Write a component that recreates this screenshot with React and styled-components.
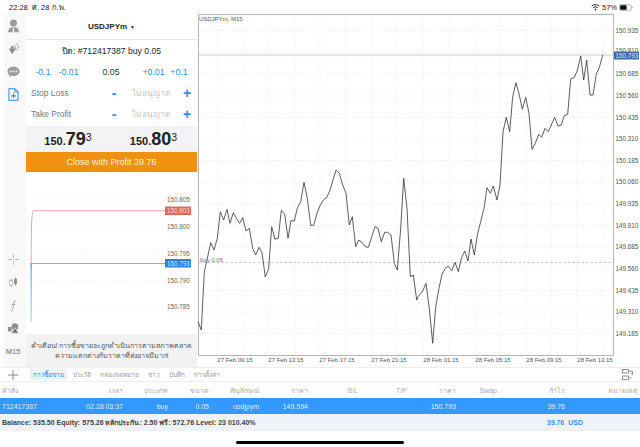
import React from "react";
import styled, { createGlobalStyle } from "styled-components";

const GlobalStyle = createGlobalStyle`
  html, body {
    margin: 0;
    padding: 0;
    background: #fff;
    overflow: hidden;
  }
  * { box-sizing: border-box; }
`;

const FONT = `"Liberation Sans", "Noto Sans", "DejaVu Sans", sans-serif`;

const Page = styled.div`
  width: 640px;
  height: 447px;
  display: flex;
  flex-direction: column;
  font-family: ${FONT};
  color: #333;
  background: #fff;
`;

const StatusBar = styled.div`
  height: 14px;
  display: flex;
  align-items: center;
  justify-content: space-between;
  padding: 0 7px 0 9px;
  font-size: 7.5px;
  color: #222;
`;

const StatusRight = styled.div`
  display: flex;
  align-items: center;
  gap: 2px;
`;

const Main = styled.div`
  height: 353px;
  display: flex;
`;

const Sidebar = styled.div`
  width: 22px;
  margin-left: 4px;
  display: flex;
  flex-direction: column;
  justify-content: space-between;
  padding: 0 4px 4px 0;
  background: #f8f8f8;
`;

const SideGroup = styled.div`
  display: flex;
  flex-direction: column;
  align-items: center;
`;

const SideItem = styled.div`
  height: 23px;
  display: flex;
  align-items: center;
  justify-content: center;
  font-size: 7.5px;
  font-weight: bold;
  color: #999;
`;

const Panel = styled.div`
  width: 171px;
  display: flex;
  flex-direction: column;
  background: #fff;
`;

const PanelHeader = styled.div`
  height: 26px;
  display: flex;
  align-items: center;
  justify-content: center;
  gap: 3px;
  font-size: 8px;
  font-weight: bold;
  color: #222;
  border-bottom: 1px solid #e6e6e6;
`;

const Caret = styled.span`
  font-size: 5px;
`;

const OrderLine = styled.div`
  height: 21px;
  display: flex;
  align-items: center;
  justify-content: center;
  font-size: 8.6px;
  color: #222;
`;

const VolumeRow = styled.div`
  height: 21px;
  display: grid;
  grid-template-columns: 34px 17px 68px 17px 34px;
  align-items: center;
  justify-items: center;
  font-size: 8.8px;
  white-space: nowrap;
`;

const Step = styled.span`
  color: #2d8ff0;
`;

const Volume = styled.span`
  color: #333;
`;

const StopRow = styled.div`
  height: 21px;
  display: grid;
  grid-template-columns: 71px 24px 49px 24px;
  align-items: center;
  padding-left: 5px;
  font-size: 8.5px;
  color: #777;
`;

const Sign = styled.span`
  justify-self: center;
  color: #2d8ff0;
  font-size: 14px;
  font-weight: bold;
  line-height: 1;
`;

const Denied = styled.span`
  justify-self: center;
  color: #c4c4c4;
  font-size: 8.4px;
`;

const Prices = styled.div`
  height: 26px;
  margin-top: 2px;
  display: grid;
  grid-template-columns: 84px 87px;
  align-items: center;
  background: #f3f3f5;
  color: #222;
  font-weight: bold;
`;

const Price = styled.div`
  display: flex;
  justify-content: center;
  align-items: baseline;
  font-size: 11px;
`;

const Big = styled.span`
  font-size: 18px;
`;

const Sup = styled.span`
  font-size: 10.5px;
  align-self: flex-start;
  margin-top: 2px;
  font-weight: normal;
`;

const CloseButton = styled.div`
  height: 20px;
  display: flex;
  align-items: center;
  justify-content: center;
  background: #f0920f;
  color: #fdf1dc;
  font-size: 9px;
`;

const MiniChart = styled.svg`
  display: block;
  width: 171px;
  height: 162px;
`;

const Warning = styled.div`
  flex: 1;
  display: flex;
  flex-direction: column;
  align-items: center;
  justify-content: center;
  background: #f2f2f2;
  font-size: 7.1px;
  line-height: 10px;
  color: #555;
  white-space: nowrap;
`;

const ChartSvg = styled.svg`
  display: block;
  width: 443px;
  height: 353px;
`;

const Toolbar = styled.div`
  height: 15px;
  display: flex;
  align-items: center;
  padding: 0 7px 0 7px;
  border-top: 1px solid #eee;
  border-bottom: 1px solid #eee;
`;

const Tabs = styled.div`
  flex: 1;
  display: flex;
  align-items: center;
  gap: 3px;
  margin-left: 11px;
`;

const Tab = styled.div`
  height: 11px;
  padding: 0 3px;
  display: flex;
  align-items: center;
  font-size: 6.5px;
  color: ${(p) => (p.$active ? "#2d8ff0" : "#999")};
  background: ${(p) => (p.$active ? "#e8f2fc" : "transparent")};
`;

const columns = "50px 73px 45px 41px 50px 49px 50px 49px 49px 41px 68px 73px";

const TableRow = styled.div`
  height: 16px;
  display: grid;
  grid-template-columns: ${columns};
  align-items: center;
  justify-items: end;
  font-size: 7px;
  color: ${(p) => (p.$selected ? "#dcecff" : "#aaa")};
  background: ${(p) => (p.$selected ? "#3399ff" : "#fff")};
  & > :first-child {
    justify-self: start;
    padding-left: 2px;
    white-space: nowrap;
  }
`;

const BalanceRow = styled.div`
  height: 16px;
  display: flex;
  align-items: center;
  justify-content: space-between;
  padding: 0 57px 0 2px;
  background: #eef3fa;
  font-size: 7px;
  font-weight: bold;
  color: #444;
`;

const BalanceProfit = styled.span`
  color: #3a94ee;
  word-spacing: 2px;
`;

const HomeArea = styled.div`
  flex: 1;
  display: flex;
  justify-content: center;
  padding-top: 10px;
  border-top: 1px solid #f0f0f0;
`;

const HomeBar = styled.div`
  width: 168px;
  height: 3px;
  border-radius: 2px;
  background: #000;
`;

// page coordinates read off the screenshot (3x crops)
const fromLeft = [[6,410],[16,435],[25,260],[35,215],[44,173],[54,195],[64,160],[73,80],[83,105],[93,73],[102,115],[112,83],[121,100],[131,115],[140,98],[150,138],[160,130],[170,190],[179,210],[189,187],[198,203],[208,276],[218,250],[227,125],[237,163],[247,160],[256,76],[266,88],[276,160],[285,107],[295,108],[304,70],[314,50],[324,-8],[334,40],[344,121],[353,121],[363,85],[372,62],[382,45],[392,38],[402,15],[411,-15],[420,-45],[430,-35],[440,0],[450,25],[460,120],[469,95],[479,185],[488,165],[498,172],[508,185],[517,187],[527,155],[537,125],[546,130],[556,170],[566,142],[575,142],[585,150],[595,235],[604,255],[614,130],[623,-20],[633,70],[643,275],[652,270],[662,345]];
const fromMiddle = [[0,335],[14,318],[24,295],[34,370],[44,475],[53,365],[63,310],[72,268],[82,250],[91,243],[101,257],[111,232],[121,260],[130,220],[140,198],[150,228],[159,162],[169,210],[179,145],[188,110],[198,70],[207,8],[217,25],[226,3],[237,45],[246,0]];
const fromTop = [[255,395],[265,352],[275,395],[284,290],[294,248],[304,285],[313,328],[323,292],[333,340],[342,448],[352,430],[362,403],[371,412],[381,385],[391,395],[400,375],[410,352],[420,378],[430,375],[439,347],[449,343],[458,237],[468,233],[478,212],[488,168],[497,240],[506,180],[516,285],[525,285],[535,222],[544,203],[554,165]];

const pricePath = [
  ...fromLeft.map(([x, y]) => [196 + x / 3, 185 + y / 3]),
  ...fromMiddle.map(([x, y]) => [418 + x / 3, 185 + y / 3]),
  ...fromTop.map(([x, y]) => [418 + x / 3, y / 3]),
]
  .map(([x, y]) => `${x.toFixed(1)},${y.toFixed(1)}`)
  .join(" ");

const gridX = [218, 243, 269, 295, 320, 346, 372, 397, 423, 449, 475, 500, 526, 551, 577, 603];
const priceLabels = [
  ["150.935", 30.5], ["150.685", 74], ["150.560", 96], ["150.435", 117.5], ["150.310", 139],
  ["150.185", 160.5], ["150.060", 182], ["149.935", 204], ["149.810", 225.5], ["149.685", 247],
  ["149.560", 269], ["149.435", 290.5], ["149.310", 312], ["149.185", 333.5],
];
const timeLabels = [
  ["27 Feb 09:15", 235], ["27 Feb 13:15", 286], ["27 Feb 17:15", 337], ["27 Feb 21:15", 389],
  ["28 Feb 01:15", 441], ["28 Feb 05:15", 493], ["28 Feb 09:15", 544], ["28 Feb 13:15", 595],
];
const gridY = [30.5, 52, 74, 96, 117.5, 139, 160.5, 182, 204, 225.5, 247, 269, 290.5, 312, 333.5];

const chartText = { fontFamily: "Liberation Sans, sans-serif", fontSize: 6, fill: "#555" };
const axisText = { ...chartText, fontSize: 6.3 };

const Chart = () => (
  <ChartSvg viewBox="197 14 443 353">
    {gridX.map((x) => (
      <line key={x} x1={x} y1="15" x2={x} y2="355" stroke="#e6e6e6" strokeWidth="0.7" strokeDasharray="1.5 2" />
    ))}
    {gridY.map((y) => (
      <line key={y} x1="198" y1={y} x2="613" y2={y} stroke="#e6e6e6" strokeWidth="0.7" strokeDasharray="1.5 2" />
    ))}
    <path d="M198.5 355V14.5H613.5V355.5H198.5" fill="none" stroke="#b5b5b5" strokeWidth="1" />
    <line x1="199" y1="55" x2="613" y2="55" stroke="#bdd0e2" strokeWidth="1" />
    <line x1="199" y1="262.5" x2="613" y2="262.5" stroke="#bbb" strokeWidth="0.8" strokeDasharray="2.5 2" />
    <polyline points={pricePath} fill="none" stroke="#333" strokeWidth="0.8" />
    <text x="199" y="21" {...chartText}>USDJPYm, M15</text>
    <text x="200" y="262" {...chartText} fill="#777">buy 0.05</text>
    {priceLabels.map(([label, y]) => (
      <text key={label} x="615.500" y={y + 2.3} {...axisText}>{label}</text>
    ))}
    <text x="615.500" y="53" {...axisText}>150.810</text>
    <rect x="614" y="51.500" width="25" height="8" fill="#3d6da6" />
    <text x="615.500" y="57.800" {...axisText} fill="#dbe6f2">150.793</text>
    {timeLabels.map(([label, x]) => (
      <text key={label} x={x} y="361.500" textAnchor="middle" {...chartText}>{label}</text>
    ))}
  </ChartSvg>
);

const miniLabels = [["150.805", 200], ["150.800", 227], ["150.795", 253.5], ["150.790", 280.5], ["150.785", 307]];

const miniText = { fontFamily: "Liberation Sans, sans-serif", fontSize: 6.3 };

const Mini = () => (
  <MiniChart viewBox="26 172 171 162">
    <defs>
      <linearGradient id="fadeBlue" x1="0" y1="0" x2="0" y2="1">
        <stop offset="0" stopColor="#6fa6e0" />
        <stop offset="1" stopColor="#bcdcf8" />
      </linearGradient>
    </defs>
    {miniLabels.map(([label, y]) => (
      <g key={label}>
        <line x1="36" y1={y} x2="164" y2={y} stroke="#e8e8e8" strokeWidth="0.7" strokeDasharray="1.5 3" />
        <text x="167" y={y + 2.3} {...miniText} fill="#666">{label}</text>
      </g>
    ))}
    <path d="M31 268 L31.500 225 Q32 210.700 34 210.700 H165" fill="none" stroke="#e9a9a0" strokeWidth="1" />
    <rect x="165" y="206.500" width="26" height="8.500" fill="#e0675f" />
    <text x="167" y="213" {...miniText} fill="#f8d8d4">150.803</text>
    <path d="M31.500 263.500 H165" fill="none" stroke="#85afe0" strokeWidth="1" />
    <rect x="30.500" y="263" width="1.300" height="59" fill="url(#fadeBlue)" />
    <rect x="165" y="259" width="26" height="8.500" fill="#2f7fe0" />
    <text x="167" y="265.500" {...miniText} fill="#d5e6fa">150.793</text>
  </MiniChart>
);

const PersonIcon = () => (
  <svg width="13" height="14" viewBox="0 0 16 18">
    <circle cx="8" cy="5" r="4.500" fill="#9b9b9b" />
    <path d="M1 17c0-4 2-6 5-6.500h4c3 .5 5 2.500 5 6.500z" fill="#9b9b9b" />
    <path d="M7.500 11h1L9 17H7z" fill="#f8f8f8" />
  </svg>
);

const ArrowsIcon = () => (
  <svg width="13" height="13" viewBox="0 0 16 16">
    <path d="M2 8h3V5h3v3h3l-4.500 7z" fill="#8f8f8f" />
    <path d="M8.500 6h2v4h2.500V6h2L12 1.500z" fill="#fff" stroke="#9b9b9b" strokeWidth="0.8" />
  </svg>
);

const ChatIcon = () => (
  <svg width="13" height="12" viewBox="0 0 15 14">
    <path d="M7.500 1C3.500 1 .5 3.300 .5 6.300c0 1.700 1 3.200 2.500 4.200L2.500 13l3-1.500c.6.100 1.300.200 2 .200 4 0 7-2.400 7-5.400S11.500 1 7.500 1z" fill="#9b9b9b" />
    <circle cx="4.300" cy="6.300" r="1" fill="#f8f8f8" />
    <circle cx="7.500" cy="6.300" r="1" fill="#f8f8f8" />
    <circle cx="10.700" cy="6.300" r="1" fill="#f8f8f8" />
  </svg>
);

const NewOrderIcon = () => (
  <svg width="11" height="13" viewBox="0 0 12 14" fill="none" stroke="#2d8ff0" strokeWidth="1.100">
    <path d="M1 .7h6.500L11 4.200v9H1z" />
    <path d="M7.500 .7v3.500H11" />
    <path d="M6 5.700v5.500M3.300 8.500h5.400" />
  </svg>
);

const CrossIcon = () => (
  <svg width="11" height="11" viewBox="0 0 13 13" stroke="#a8a8a8" strokeWidth="0.9">
    <path d="M6.500 0v5M6.500 8v5M0 6.500h5M8 6.500h5" />
  </svg>
);

const CandlesIcon = () => (
  <svg width="9" height="11" viewBox="0 0 11 13">
    <path d="M2.500 1.500v11" stroke="#9b9b9b" strokeWidth="0.8" />
    <rect x="1" y="4" width="3" height="6" fill="#fff" stroke="#9b9b9b" strokeWidth="0.8" />
    <path d="M8 0v11" stroke="#8a8a8a" strokeWidth="0.8" />
    <rect x="6.300" y="2" width="3.400" height="6.500" fill="#8a8a8a" />
  </svg>
);

const FunctionIcon = () => (
  <svg width="7" height="12" viewBox="0 0 9 15" fill="none" stroke="#9b9b9b" strokeWidth="1.100">
    <path d="M8 1.200C6 .4 5.200 1.500 4.800 3.500L3.400 11.500C3 13.500 2 14.300 .8 13.700" />
    <path d="M2.300 5.500h4.500" />
  </svg>
);

const ObjectsIcon = () => (
  <svg width="11" height="11" viewBox="0 0 15 14">
    <rect x="0" y="5" width="5" height="6" fill="#8f8f8f" />
    <circle cx="9.500" cy="4.500" r="4.500" fill="#8f8f8f" />
    <path d="M9.500 6 14.500 13.500H4.500z" fill="#777" stroke="#f8f8f8" strokeWidth="0.7" />
  </svg>
);

const PlusIcon = () => (
  <svg width="12" height="12" viewBox="0 0 12 12" stroke="#888" strokeWidth="1">
    <path d="M6 1v10M1 6h10" />
  </svg>
);

const ConnectIcon = () => (
  <svg width="11" height="11" viewBox="0 0 11 11" fill="none" stroke="#888" strokeWidth="0.9">
    <rect x="0.500" y="0.500" width="6" height="3.500" />
    <rect x="0.500" y="7" width="6" height="3.500" />
    <path d="M6.500 2.200h4v3.300M10.500 5.500 9 4M10.500 5.500 11 5" />
    <path d="M6.500 8.800h3" />
  </svg>
);

const WifiIcon = () => (
  <svg width="9" height="7" viewBox="0 0 9 7" fill="none" stroke="#222" strokeWidth="1">
    <path d="M.7 2.200a5.500 5.500 0 0 1 7.600 0M2.200 3.800a3.300 3.300 0 0 1 4.600 0" />
    <circle cx="4.500" cy="5.600" r="0.900" fill="#222" stroke="none" />
  </svg>
);

const BatteryIcon = () => (
  <svg width="14" height="7" viewBox="0 0 14 7">
    <rect x="0.400" y="0.400" width="11.700" height="6.200" rx="1.500" fill="none" stroke="#999" strokeWidth="0.7" />
    <rect x="1.200" y="1.200" width="6.400" height="4.600" rx="0.700" fill="#111" />
    <path d="M12.700 2.300c.7.200.9.600.9 1.200s-.2 1-.9 1.200z" fill="#999" />
  </svg>
);

const tableHead = ["คำสั่ง", "เวลา", "ประเภท", "ขนาด", "สัญลักษณ์", "ราคา", "S/L", "T/P", "ราคา", "Swap", "กำไร", "หมายเหตุ"];
const tableRow = ["712417387", "02.28 03:37", "buy", "0.05", "usdjpym", "149.594", "", "", "150.793", "", "39.76", ""];
const tabs = ["การซื้อขาย", "ประวัติ", "กล่องจดหมาย", "ข่าว", "บันทึก", "การตั้งค่า"];

const PriceValue = ({ small, big, sup }) => (
  <Price>
    {small}
    <Big>{big}</Big>
    <Sup>{sup}</Sup>
  </Price>
);

const App = () => (
  <Page>
    <GlobalStyle />
    <StatusBar>
      <span>22:28 &nbsp;ศ. 28 ก.พ.</span>
      <StatusRight>
        <WifiIcon />
        <span>57%</span>
        <BatteryIcon />
      </StatusRight>
    </StatusBar>
    <Main>
      <Sidebar>
        <SideGroup>
          <SideItem><PersonIcon /></SideItem>
          <SideItem><ArrowsIcon /></SideItem>
          <SideItem><ChatIcon /></SideItem>
          <SideItem><NewOrderIcon /></SideItem>
        </SideGroup>
        <SideGroup>
          <SideItem><CrossIcon /></SideItem>
          <SideItem><CandlesIcon /></SideItem>
          <SideItem><FunctionIcon /></SideItem>
          <SideItem><ObjectsIcon /></SideItem>
          <SideItem>M15</SideItem>
        </SideGroup>
      </Sidebar>
      <Panel>
        <PanelHeader>USDJPYm<Caret>▼</Caret></PanelHeader>
        <OrderLine>ปิด: #712417387 buy 0.05</OrderLine>
        <VolumeRow>
          <Step>-0.1</Step>
          <Step>-0.01</Step>
          <Volume>0.05</Volume>
          <Step>+0.01</Step>
          <Step>+0.1</Step>
        </VolumeRow>
        <StopRow>
          <span>Stop Loss</span>
          <Sign>-</Sign>
          <Denied>ไม่อนุญาต</Denied>
          <Sign>+</Sign>
        </StopRow>
        <StopRow>
          <span>Take Profit</span>
          <Sign>-</Sign>
          <Denied>ไม่อนุญาต</Denied>
          <Sign>+</Sign>
        </StopRow>
        <Prices>
          <PriceValue small="150." big="79" sup="3" />
          <PriceValue small="150." big="80" sup="3" />
        </Prices>
        <CloseButton>Close with Profit 39.76</CloseButton>
        <Mini />
        <Warning>
          <span>คำเตือน! การซื้อขายจะถูกดำเนินการตามสภาพตลาด</span>
          <span>ความแตกต่างกับราคาที่ส่งอาจมีมาก!</span>
        </Warning>
      </Panel>
      <Chart />
    </Main>
    <Toolbar>
      <PlusIcon />
      <Tabs>
        {tabs.map((t, i) => (
          <Tab key={t} $active={i === 0}>{t}</Tab>
        ))}
      </Tabs>
      <ConnectIcon />
    </Toolbar>
    <TableRow>
      {tableHead.map((h, i) => <span key={i}>{h}</span>)}
    </TableRow>
    <TableRow $selected>
      {tableRow.map((c, i) => <span key={i}>{c}</span>)}
    </TableRow>
    <BalanceRow>
      <span>Balance: 535.50 Equity: 575.26 หลักประกัน: 2.50 ฟรี: 572.76 Level: 23 010.40%</span>
      <BalanceProfit>39.76 USD</BalanceProfit>
    </BalanceRow>
    <HomeArea>
      <HomeBar />
    </HomeArea>
  </Page>
);

export default App;
